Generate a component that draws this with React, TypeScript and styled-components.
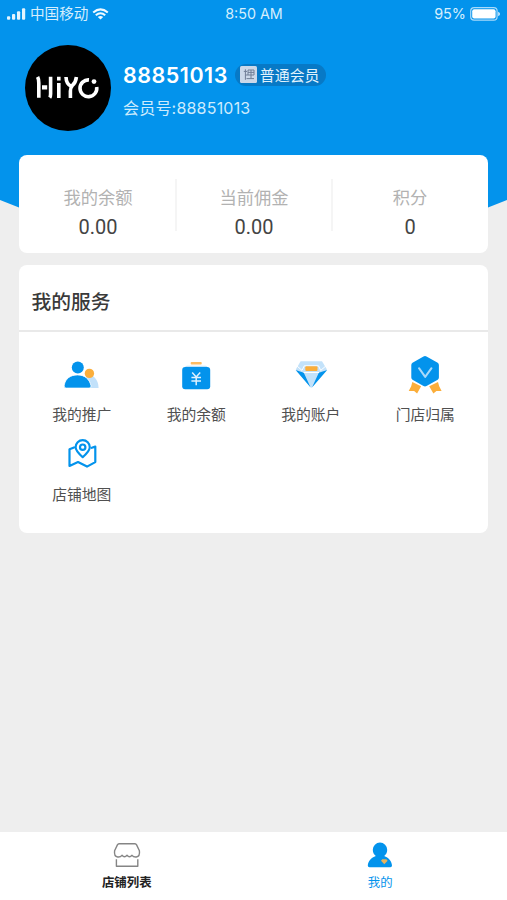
import React from "react";
import styled, { createGlobalStyle } from "styled-components";

const BLUE = "#0393ec";
const CJK = '"Noto Sans CJK SC", sans-serif';

const GlobalStyle = createGlobalStyle`
  * { box-sizing: border-box; }
  body { margin: 0; background: #eee; font-family: ${CJK}; }
`;

const Page = styled.div`
  width: 507px;
  height: 900px;
  display: flex;
  flex-direction: column;
  overflow: hidden;
  background: #eee;
`;

const Header = styled.header`
  flex: none;
  height: 240px;
  margin-bottom: -85px;
  background: ${BLUE};
  color: #fff;
  clip-path: polygon(0 0, 100% 0, 100% 200px, 96.25% 207.5px, 75% 230px, 25% 230px, 3.75% 207.5px, 0 200px);
`;

const StatusBar = styled.div`
  height: 28px;
  padding: 0 6px 0 7px;
  display: grid;
  grid-template-columns: 1fr auto 1fr;
  align-items: center;
  font: 400 14.3px/28px Inter, ${CJK};
  color: #d5eefd;
`;

const StatusGroup = styled.div<{ $end?: boolean }>`
  display: flex;
  align-items: center;
  justify-content: ${(p) => (p.$end ? "flex-end" : "flex-start")};
  gap: 4px;
  font-size: ${(p) => (p.$end ? 14.4 : 14.6)}px;
`;

const Profile = styled.div`
  display: flex;
  align-items: center;
  gap: 12px;
  padding: 17px 25px 0;
`;

const Avatar = styled.svg`
  display: block;
  width: 86px;
  height: 86px;
  flex: none;
`;

const Identity = styled.div`
  display: flex;
  flex-direction: column;
  gap: 7px;
  padding-top: 4px;
`;

const NameLine = styled.div`
  display: flex;
  align-items: center;
  gap: 7px;
  height: 28px;
`;

const Name = styled.span`
  font: 600 21.5px/28px Inter, ${CJK};
  letter-spacing: 0.5px;
  white-space: nowrap;
`;

const Badge = styled.span`
  display: flex;
  align-items: center;
  gap: 3px;
  height: 22px;
  padding: 0 7px 0 5px;
  border-radius: 11px;
  background: #0779c6;
  color: #e2f3fd;
  font-size: 14.9px;
  line-height: 22px;
  white-space: nowrap;
`;

const MemberNo = styled.div`
  font: 400 16px/24px Inter, ${CJK};
  letter-spacing: 0.2px;
  color: #cdebfd;
  white-space: nowrap;
`;

const Card = styled.section`
  flex: none;
  width: 469px;
  margin: 0 0 0 19px;
  border-radius: 8px;
  background: #fff;
  z-index: 1;
`;

const Stats = styled(Card)`
  height: 98px;
  display: grid;
  grid-template-columns: repeat(3, 156px);
  padding: 24px 0 0 2px;
`;

const Stat = styled.div`
  height: 52px;
  border-right: 2px solid #f5f5f5;
  text-align: center;
  &:last-child { border-right-color: transparent; }
`;

const StatLabel = styled.div`
  padding-top: 5px;
  font-size: 17.3px;
  line-height: 26px;
  color: #b2b2b2;
`;

const StatValue = styled.div`
  padding-top: 4px;
  font: 400 20px/26px Roboto, ${CJK};
  color: #444;
`;

const Services = styled(Card)`
  height: 268px;
  margin-top: 12.4px;
`;

const ServicesTitle = styled.h2`
  margin: 0;
  height: 67px;
  padding: 4px 12.5px 0;
  border-bottom: 2px solid #e9e9e9;
  font-size: 19.8px;
  font-weight: 500;
  line-height: 63px;
  color: #3a3a3a;
`;

const ServiceGrid = styled.div`
  display: grid;
  grid-template-columns: repeat(4, 114.5px);
  padding: 18px 5px 0 5.5px;
`;

const Service = styled.div`
  height: 80px;
  display: flex;
  flex-direction: column;
  align-items: center;
  font-size: 14.8px;
  line-height: 22px;
  color: #505050;
`;

const ServiceIcon = styled.svg`
  display: block;
  width: 48px;
  height: 48px;
  margin-bottom: 4.5px;
`;

const TabBar = styled.nav`
  flex: none;
  height: 68px;
  margin-top: auto;
  display: grid;
  grid-template-columns: 1fr 1fr;
  background: #fff;
`;

const Tab = styled.div<{ $active?: boolean }>`
  display: flex;
  flex-direction: column;
  align-items: center;
  padding-top: 7px;
  font-size: 12.4px;
  font-weight: ${(p) => (p.$active ? 400 : 700)};
  line-height: 18px;
  color: ${(p) => (p.$active ? BLUE : "#222")};
`;

const TabIcon = styled.svg`
  display: block;
  width: 32px;
  height: 32px;
  margin-bottom: 2px;
`;

const Signal = () => (
  <svg width="19" height="12" viewBox="0 0 19 12" fill="#e4f4fe">
    <rect x="0" y="8.3" width="3.2" height="3.4" rx="1" />
    <rect x="5" y="6" width="3.2" height="5.7" rx="1" />
    <rect x="10" y="3.3" width="3.2" height="8.4" rx="1" />
    <rect x="15" y="0.3" width="3.2" height="11.4" rx="1" />
  </svg>
);

const Wifi = () => (
  <svg width="17" height="12" viewBox="0 0 17 12" fill="none" stroke="#f1f9ff" strokeWidth="2.1">
    <path d="M1.2 4.5Q8.5-1.7 15.8 4.5" />
    <path d="M3.8 7.3Q8.5 3.2 13.2 7.3" />
    <path d="M8.5 11.5 5.8 9Q8.5 7 11.2 9Z" fill="#f1f9ff" stroke="none" />
  </svg>
);

const Battery = () => (
  <svg width="31" height="14" viewBox="0 0 31 14">
    <rect x="0.7" y="0.7" width="26.4" height="12.4" rx="3.4" fill="none" stroke="#a9dafa" strokeWidth="1.2" />
    <rect x="2.2" y="2.2" width="23.4" height="9.4" rx="2" fill="#fff" />
    <path d="M28.2 4.7q1.8.8 1.8 2.3t-1.8 2.3Z" fill="#d4edfd" />
  </svg>
);

const HiyoAvatar = () => (
  <Avatar viewBox="0 0 86 86" role="img" aria-label="HiYO">
    <circle cx="43" cy="43" r="43" fill="#000" />
    <g fill="none" stroke="#fff" strokeWidth="3.6">
      <path d="M12.6 31.8Q13.8 34 13.8 38V52.8" />
      <path d="M25.6 31.8V49Q25.6 51.4 24.7 52.6" />
      <path d="M17 42.4H22.2" strokeWidth="4.2" />
      <path d="M33.8 38V53M33.8 31.8V35.4" />
      <path d="M41 32Q41.2 38.8 46 41.2M51.4 32Q50.8 37.5 47.4 40.4Q45.4 42.8 45.4 46V53" />
      <path d="M64 34.9A8.4 8.4 0 1 0 71.7 42" />
    </g>
    <circle cx="69" cy="36.6" r="2.4" fill="#fff" />
  </Avatar>
);

const BadgeMark = () => (
  <svg width="17" height="17" viewBox="0 0 17 17">
    <rect width="17" height="17" rx="1.5" fill="#ccd8e9" />
    <path
      d="M5.4 3.3V13.8M3.8 5.4H7M8 4H14V9H8ZM8 6.4H14M11 4V12M6.5 12.6H14M5.4 9H8"
      fill="none"
      stroke="#707e96"
      strokeWidth="1"
    />
  </svg>
);

const PromoIcon = () => (
  <ServiceIcon viewBox="0 0 48 48">
    <path d="M28 24c7 0 12.4 5.2 12.6 14H29Z" fill="#c2e1fa" />
    <path d="M6.2 35.2C7.4 28.5 12.4 24.9 19.5 24.9S31.5 28.9 33 35.8q.4 2.3-2 2.3H8.2q-2.5 0-2-2.9Z" fill={BLUE} stroke="#fff" strokeWidth=".8" />
    <circle cx="19.8" cy="17.6" r="6" fill={BLUE} />
    <circle cx="31.4" cy="23.4" r="4.7" fill="#fbae3b" />
  </ServiceIcon>
);

const BalanceIcon = () => (
  <ServiceIcon viewBox="0 0 48 48">
    <rect x="18.7" y="12" width="11" height="2.6" rx=".8" fill="#fdbb62" />
    <rect x="13" y="15.8" width="22.5" height="4" rx="2" fill="#bfe3fb" />
    <rect x="10.2" y="17" width="28" height="22.2" rx="3" fill={BLUE} />
    <path d="m20.2 22.6 4 4.4 4-4.4M24.2 26.8v8.4M19.4 27.6h9.6M19.4 30.9h9.6" fill="none" stroke="#dff1fe" strokeWidth="1.5" />
  </ServiceIcon>
);

const DiamondIcon = () => (
  <ServiceIcon viewBox="0 0 48 48">
    <path d="M13.6 11.3H35l5 8.2L24.3 38 8.8 19.5Z" fill="#c3e2fa" />
    <path d="M8.6 20 16.8 22.8 23.6 37.4ZM40.2 20 31.8 22.8 25 37.4Z" fill={BLUE} />
    <path d="M8.8 15 15 20.4 17.3 15.8H31.5L33.7 20.4 40 15M16.6 22.5H32" fill="none" stroke="#fff" strokeWidth="1" />
    <rect x="18.3" y="16.3" width="12.2" height="4.6" rx="1" fill="#fbae3b" />
  </ServiceIcon>
);

const StoreMedalIcon = () => (
  <ServiceIcon viewBox="0 0 48 48">
    <path d="m11.3 32 8.8 4.3-4 7.2-3-2.6-5.4.2 2.5-4.8ZM37 32l-8.8 4.3 4.2 7.2 3-2.6 5.2.2-2.4-4.8Z" fill="#fbae3b" />
    <path d="M22.5 6.5q1.5-.9 3 0L36.7 12.8q1.2.8 1.2 2.2V27.6q0 1.5-1.2 2.2L25.5 36q-1.5.9-3 0L11.5 29.8q-1.2-.7-1.2-2.2V15q0-1.5 1.2-2.2Z" fill={BLUE} />
    <path d="m18 18.2 6.2 8.7 6.3-8.7" fill="none" stroke="#a9d9fa" strokeWidth="2" strokeLinecap="round" strokeLinejoin="round" />
  </ServiceIcon>
);

const MapIcon = () => (
  <ServiceIcon viewBox="0 0 48 48">
    <g fill="none" stroke={BLUE} strokeWidth="2.2" strokeLinejoin="round" strokeLinecap="round">
      <path d="M16 17.4 11.5 19.2V36L20 32.1 29 36.6 37.3 32.1V16.6L33.8 17.8" />
      <path d="M24.7 27.2C20 23 17.6 20.4 17.6 17.3a7.1 7.1 0 0 1 14.2 0c0 3.1-2.4 5.7-7.1 9.9Z" />
      <circle cx="24.7" cy="17.2" r="2.7" />
    </g>
  </ServiceIcon>
);

const services = [
  { label: "我的推广", Icon: PromoIcon },
  { label: "我的余额", Icon: BalanceIcon },
  { label: "我的账户", Icon: DiamondIcon },
  { label: "门店归属", Icon: StoreMedalIcon },
  { label: "店铺地图", Icon: MapIcon },
];

const stats = [
  { label: "我的余额", value: "0.00" },
  { label: "当前佣金", value: "0.00" },
  { label: "积分", value: "0" },
];

export default function App() {
  return (
    <Page>
      <GlobalStyle />
      <Header>
        <StatusBar>
          <StatusGroup>
            <Signal />
            <span>中国移动</span>
            <Wifi />
          </StatusGroup>
          <span>8:50 AM</span>
          <StatusGroup $end>
            <span>95%</span>
            <Battery />
          </StatusGroup>
        </StatusBar>
        <Profile>
          <HiyoAvatar />
          <Identity>
            <NameLine>
              <Name>88851013</Name>
              <Badge>
                <BadgeMark />
                普通会员
              </Badge>
            </NameLine>
            <MemberNo>会员号:88851013</MemberNo>
          </Identity>
        </Profile>
      </Header>
      <Stats>
        {stats.map((s) => (
          <Stat key={s.label}>
            <StatLabel>{s.label}</StatLabel>
            <StatValue>{s.value}</StatValue>
          </Stat>
        ))}
      </Stats>
      <Services>
        <ServicesTitle>我的服务</ServicesTitle>
        <ServiceGrid>
          {services.map(({ label, Icon }) => (
            <Service key={label}>
              <Icon />
              {label}
            </Service>
          ))}
        </ServiceGrid>
      </Services>
      <TabBar>
        <Tab>
          <TabIcon viewBox="0 0 32 32">
            <g fill="none" stroke="#858585" strokeWidth="1.4" strokeLinejoin="round">
              <path d="M8 4.7H24Q25 4.7 25.6 5.9L28.4 11.8Q29.2 17.2 25.3 18Q22.5 18.3 21 16.3Q18.5 19.3 16 16.3Q13.5 19.3 11 16.3Q9.5 18.3 6.7 18Q2.8 17.2 3.6 11.8L6.4 5.9Q7 4.7 8 4.7Z" />
              <path d="M5.4 20.3V27.3H26.8V20.3" />
            </g>
          </TabIcon>
          店铺列表
        </Tab>
        <Tab $active>
          <TabIcon viewBox="0 0 32 32">
            <path
              d="M16 3.6a7.2 7.2 0 0 1 7.2 7.2c0 2.8-1.2 4.9-3 6.2 4.3 1.4 7.6 5.2 7.8 9.6q0 1.6-1.6 1.6H5.4q-1.6 0-1.6-1.6C4 22.2 7.4 18.4 11.8 17c-1.8-1.3-3-3.4-3-6.2A7.2 7.2 0 0 1 16 3.6Z"
              fill={BLUE}
            />
            <path d="M18.2 20.3h4.2l1.2 1.5-3.3 3.4-3.3-3.4Z" fill="#e8b35b" />
          </TabIcon>
          我的
        </Tab>
      </TabBar>
    </Page>
  );
}
